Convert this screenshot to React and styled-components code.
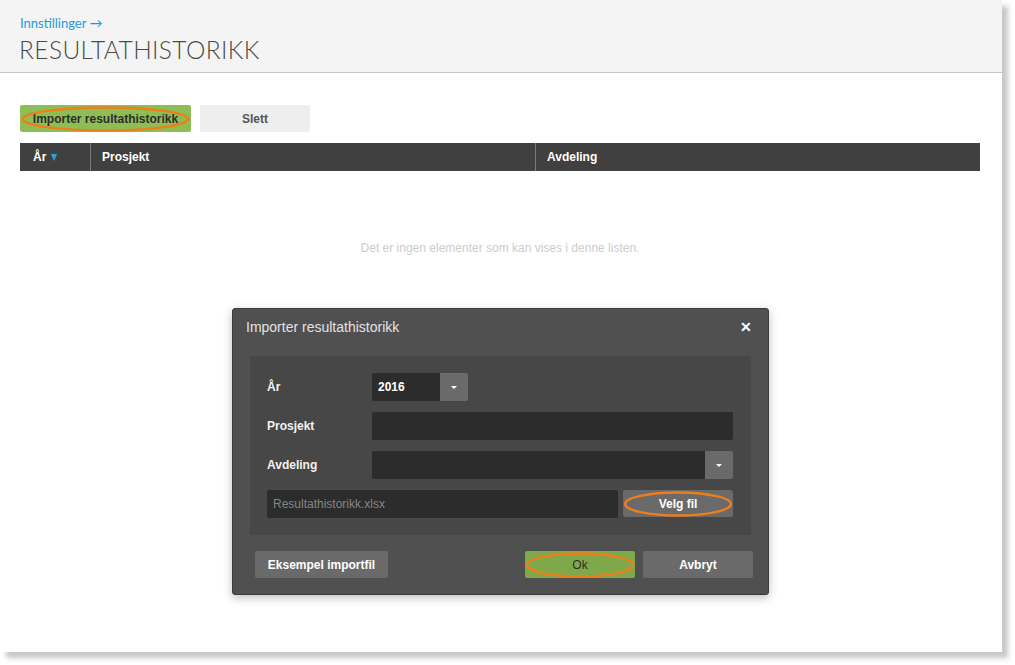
import React from "react";
import styled, { createGlobalStyle } from "styled-components";

const Global = createGlobalStyle`
  html, body { margin: 0; padding: 0; background: #fff; }
  body { font-family: "Liberation Sans", Arial, sans-serif; }
  * { box-sizing: border-box; }
`;

const Stage = styled.div`
  width: 1015px;
  height: 665px;
  background: #fff;
  padding: 0 13px 13px 0;
`;

const Frame = styled.div`
  position: relative;
  width: 1002px;
  height: 652px;
  background: #fff;
  box-shadow: 6px 6px 5px rgba(0, 0, 0, 0.22);
`;

const Header = styled.header`
  height: 73px;
  background: #f4f4f4;
  border-bottom: 1px solid #c6c6c6;
  padding: 15px 19px 0;
`;

const Crumb = styled.a`
  display: block;
  font-family: Lato, "Liberation Sans", sans-serif;
  font-size: 13px;
  color: #1f9ad6;
  text-decoration: none;
  margin-left: 1px;
  line-height: 17px;
`;

const Title = styled.h1`
  margin: 3px 0 0;
  font-family: Lato, "Liberation Sans", sans-serif;
  font-weight: 300;
  font-size: 24.5px;
  letter-spacing: 0.4px;
  color: #4a4a4a;
  line-height: 30px;
`;

const Content = styled.main`
  padding: 32px 22px 0 20px;
`;

const Toolbar = styled.div`
  display: flex;
  gap: 9px;
  margin-bottom: 11px;
`;

const Btn = styled.button`
  position: relative;
  height: 27px;
  width: ${(p) => p.$w || 110}px;
  border: none;
  border-radius: 2px;
  font-family: "Liberation Sans", Arial, sans-serif;
  font-size: 12px;
  padding: 0;
  cursor: pointer;
  background: ${(p) =>
    p.$kind === "green" ? "#8fbd55" : p.$kind === "greenDark" ? "#7fa84a" : p.$kind === "light" ? "#eeeeee" : "#6a6a6a"};
  color: ${(p) =>
    p.$kind === "green" || p.$kind === "greenDark" ? "#2e2e2e" : p.$kind === "light" ? "#555" : "#fff"};
  font-weight: ${(p) => (p.$kind === "greenDark" ? "normal" : "bold")};
`;

const Ring = styled.svg`
  position: absolute;
  left: 1px;
  top: 1px;
  width: calc(100% - 2px);
  height: calc(100% - 1px);
  pointer-events: none;
  overflow: visible;
`;

const Highlight = () => (
  <Ring viewBox="0 0 100 26" preserveAspectRatio="none">
    <ellipse cx="50" cy="13" rx="49" ry="11.5" fill="none" stroke="#ec7f1c" strokeWidth="2.4" vectorEffect="non-scaling-stroke" />
  </Ring>
);

const Grid = styled.div`
  display: grid;
  grid-template-columns: 70px 445px 1fr;
  height: 28px;
  background: #404040;
  width: 960px;
`;

const HeadCell = styled.div`
  display: flex;
  align-items: center;
  gap: 5px;
  color: #fff;
  font-size: 12px;
  font-weight: bold;
  border-left: ${(p) => (p.$first ? "none" : "1px solid #7a7a7a")};
  padding-left: ${(p) => (p.$first ? 13 : 11)}px;
`;

const Sort = styled.span`
  width: 0;
  height: 0;
  border-left: 3.5px solid transparent;
  border-right: 3.5px solid transparent;
  border-top: 7px solid #2ea3d8;
  margin-top: 1px;
`;

const Empty = styled.p`
  margin: 70px 0 0;
  width: 960px;
  text-align: center;
  font-size: 12px;
  color: #cccccc;
`;

const Dialog = styled.div`
  position: absolute;
  left: 232px;
  top: 308px;
  width: 537px;
  height: 287px;
  background: #505050;
  border: 1px solid #3c3c3c;
  border-radius: 3px;
  box-shadow: 0 3px 10px rgba(0, 0, 0, 0.25);
  padding: 0 17px;
  display: flex;
  flex-direction: column;
`;

const DialogHead = styled.div`
  height: 36px;
  margin-bottom: 11px;
  display: flex;
  align-items: center;
  justify-content: space-between;
  margin-left: -4px;
  margin-right: -1px;
  color: #e2e2e2;
  font-size: 14px;
`;

const Close = styled.span`
  font-size: 14px;
  font-weight: bold;
  color: #fff;
  line-height: 1;
`;

const Panel = styled.div`
  background: #474747;
  padding: 17px;
  display: flex;
  flex-direction: column;
  gap: 11px;
  height: 179px;
`;

const Row = styled.div`
  display: flex;
  align-items: center;
  height: 28px;
`;

const Label = styled.label`
  width: 105px;
  color: #f2f2f2;
  font-size: 12px;
  font-weight: bold;
`;

const Field = styled.div`
  display: flex;
  width: ${(p) => p.$w}px;
  height: 28px;
  border-radius: 2px;
  overflow: hidden;
  margin-left: ${(p) => p.$gap || 0}px;
`;

const Input = styled.div`
  flex: 1;
  background: #2c2c2c;
  color: ${(p) => (p.$muted ? "#858585" : "#fff")};
  font-size: 12px;
  font-weight: ${(p) => (p.$muted ? "normal" : "bold")};
  display: flex;
  align-items: center;
  padding-left: 6px;
`;

const Caret = styled.div`
  width: 28px;
  background: #6a6a6a;
  display: flex;
  align-items: center;
  justify-content: center;
  &::after {
    content: "";
    border-left: 3px solid transparent;
    border-right: 3px solid transparent;
    border-top: 3px solid #fff;
  }
`;

const Footer = styled.div`
  display: flex;
  align-items: center;
  padding: 16px 0 0 5px;
`;

const Spacer = styled.div`
  flex: 1;
`;

const Actions = styled.div`
  display: flex;
  gap: 8px;
  margin-right: -2px;
`;

export default function App() {
  return (
    <>
      <Global />
      <Stage>
        <Frame>
          <Header>
            <Crumb href="#">Innstillinger →</Crumb>
            <Title>RESULTATHISTORIKK</Title>
          </Header>
          <Content>
            <Toolbar>
              <Btn $kind="green" $w={171}>
                Importer resultathistorikk
                <Highlight />
              </Btn>
              <Btn $kind="light" $w={110}>Slett</Btn>
            </Toolbar>
            <Grid>
              <HeadCell $first>
                År <Sort />
              </HeadCell>
              <HeadCell>Prosjekt</HeadCell>
              <HeadCell>Avdeling</HeadCell>
            </Grid>
            <Empty>Det er ingen elementer som kan vises i denne listen.</Empty>
          </Content>

          <Dialog role="dialog">
            <DialogHead>
              <span>Importer resultathistorikk</span>
              <Close>✕</Close>
            </DialogHead>
            <Panel>
              <Row>
                <Label>År</Label>
                <Field $w={96}>
                  <Input>2016</Input>
                  <Caret />
                </Field>
              </Row>
              <Row>
                <Label>Prosjekt</Label>
                <Field $w={361}>
                  <Input />
                </Field>
              </Row>
              <Row>
                <Label>Avdeling</Label>
                <Field $w={361}>
                  <Input />
                  <Caret />
                </Field>
              </Row>
              <Row>
                <Field $w={351}>
                  <Input $muted>Resultathistorikk.xlsx</Input>
                </Field>
                <Field $w={110} $gap={5}>
                  <Btn $kind="dark" $w={110}>
                    Velg fil
                    <Highlight />
                  </Btn>
                </Field>
              </Row>
            </Panel>
            <Footer>
              <Btn $kind="dark" $w={133}>Eksempel importfil</Btn>
              <Spacer />
              <Actions>
                <Btn $kind="greenDark" $w={110}>
                  Ok
                  <Highlight />
                </Btn>
                <Btn $kind="dark" $w={110}>Avbryt</Btn>
              </Actions>
            </Footer>
          </Dialog>
        </Frame>
      </Stage>
    </>
  );
}
